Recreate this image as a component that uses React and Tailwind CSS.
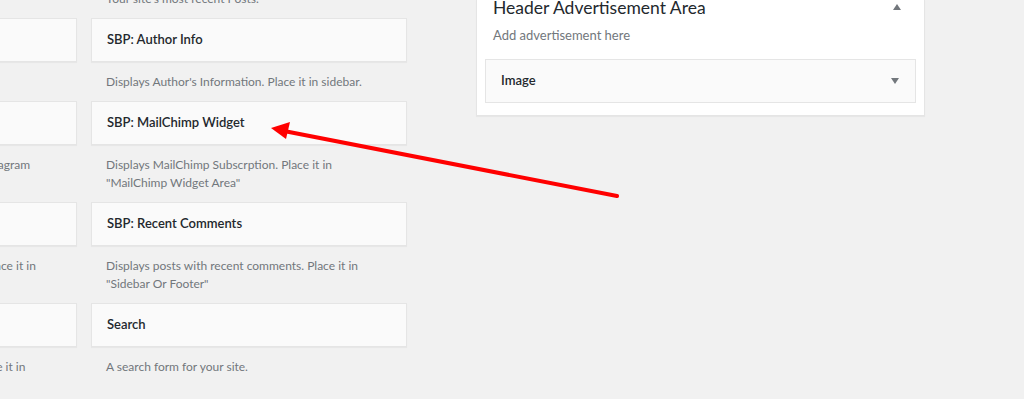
import React from "react";

const font = { fontFamily: 'Lato, "Noto Sans", sans-serif' };

function Card({ title }) {
  return (
    <div className="h-[44px] flex items-center px-[15px] bg-[#fafafa] border border-[#e5e5e5] shadow-[0_1px_1px_rgba(0,0,0,0.04)] text-[13px] font-semibold text-[#23282d]">
      {title}
    </div>
  );
}

function Desc({ children }) {
  return (
    <div className="px-[15px] pt-[11px] pb-[10px] text-[12px] leading-[18px] text-[#72777c] whitespace-nowrap">
      {children}
    </div>
  );
}

const rows = [
  {
    left: { title: "SBP: Ads", desc: "Displays ads. Place it." },
    right: { title: "SBP: Author Info", desc: "Displays Author's Information. Place it in sidebar." },
  },
  {
    left: { title: "SBP: Instagram", desc: "Displays the newest photos from your Instagram" },
    right: {
      title: "SBP: MailChimp Widget",
      desc: (
        <>
          Displays MailChimp Subscrption. Place it in
          <br />
          "MailChimp Widget Area"
        </>
      ),
    },
  },
  {
    left: { title: "SBP: Popular Posts", desc: (<>Displays most popular posts of the site. Place it in<br />"Sidebar"</>) },
    right: {
      title: "SBP: Recent Comments",
      desc: (
        <>
          Displays posts with recent comments. Place it in
          <br />
          "Sidebar Or Footer"
        </>
      ),
    },
  },
  {
    left: { title: "SBP: Recent Posts", desc: "Displays your most recent blog posts. Place it in" },
    right: { title: "Search", desc: "A search form for your site." },
  },
];

export default function App() {
  return (
    <div className="relative w-[1024px] h-[399px] overflow-hidden bg-[#f1f1f1]" style={font}>
      <div className="flex">
        <div className="ml-[-239px] w-[645px] shrink-0 mt-[-21px]">
          <div className="grid grid-cols-[316px_316px] gap-x-[14px]">
            <Desc>Displays a list of posts.</Desc>
            <Desc>Your site's most recent Posts.</Desc>
            {rows.map((r, i) => (
              <React.Fragment key={i}>
                <div>
                  <Card title={r.left.title} />
                  <Desc>{r.left.desc}</Desc>
                </div>
                <div>
                  <Card title={r.right.title} />
                  <Desc>{r.right.desc}</Desc>
                </div>
              </React.Fragment>
            ))}
          </div>
        </div>
        <div className="ml-[70px] w-[449px] shrink-0 self-start">
          <div className="bg-white border border-[#e5e5e5] border-t-0 shadow-[0_1px_1px_rgba(0,0,0,0.04)] px-[8px] pb-[12px]">
            <div className="flex items-center justify-between px-[8px] h-[16px]">
              <h2 className="text-[17.5px] leading-[16px] text-[#23282d] mt-[-1px]">Header Advertisement Area</h2>
              <span className="mr-[7px] mt-[-3px] w-0 h-0 border-l-[4px] border-r-[4px] border-b-[6px] border-l-transparent border-r-transparent border-b-[#72777c]" />
            </div>
            <div className="px-[8px] pt-[10px] text-[13px] leading-[19px] text-[#72777c]">Add advertisement here</div>
            <div className="mt-[14px] h-[44px] flex items-center justify-between px-[15px] bg-[#fafafa] border border-[#e5e5e5] text-[13px] font-semibold text-[#23282d]">
              <span>Image</span>
              <span className="mr-[1px] w-0 h-0 border-l-[4px] border-r-[4px] border-t-[6px] border-l-transparent border-r-transparent border-t-[#72777c]" />
            </div>
          </div>
        </div>
      </div>
      <svg className="absolute inset-0 pointer-events-none" width="1024" height="399" viewBox="0 0 1024 399">
        <line x1="617" y1="196" x2="284" y2="131" stroke="#ff0000" strokeWidth="4" strokeLinecap="round" />
        <polygon points="271,128 290,122 286,139" fill="#ff0000" />
      </svg>
    </div>
  );
}
